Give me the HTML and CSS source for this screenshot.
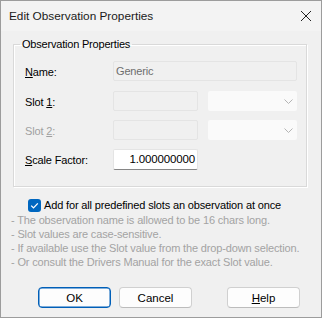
FILE: index.html
```html
<!DOCTYPE html>
<html lang="en">

<head>
    <meta charset="UTF-8">
    <title>Edit Observation Properties</title>
    <link rel="stylesheet" href="styles.css">
</head>

<body>
    <div class="window">
        <div class="titlebar">
            <span class="title">Edit Observation Properties</span>
            <svg class="close" width="12" height="12" viewBox="0 0 12 12">
                <path d="M1 1 L11 11 M11 1 L1 11" stroke="#222" stroke-width="1" fill="none" />
            </svg>
        </div>

        <div class="client">
            <fieldset class="group">
                <legend>Observation Properties</legend>
                <div class="fields">
                    <div class="row first">
                        <label><u>N</u>ame:</label>
                        <div class="field disabled name">Generic</div>
                    </div>

                    <div class="row">
                        <label>Slot <u>1</u>:</label>
                        <div class="field disabled"></div>
                        <div class="combo">
                            <svg width="9" height="5" viewBox="0 0 9 5"><path d="M0.5 0.5 L4.5 4.5 L8.5 0.5" stroke="#b4b4b4" fill="none" /></svg>
                        </div>
                    </div>

                    <div class="row">
                        <label class="off">Slot <u>2</u>:</label>
                        <div class="field disabled"></div>
                        <div class="combo">
                            <svg width="9" height="5" viewBox="0 0 9 5"><path d="M0.5 0.5 L4.5 4.5 L8.5 0.5" stroke="#b4b4b4" fill="none" /></svg>
                        </div>
                    </div>

                    <div class="row tall">
                        <label><u>S</u>cale Factor:</label>
                        <div class="field scale">1.000000000</div>
                    </div>
                </div>
            </fieldset>

            <label class="check">
                <span class="box">
                    <svg width="13" height="13" viewBox="0 0 13 13">
                        <rect x="0" y="0" width="13" height="13" rx="3" fill="#0067c0" />
                        <path d="M3.2 6.6 L5.5 8.9 L9.8 4.4" stroke="#fff" stroke-width="1.3" fill="none" />
                    </svg>
                </span>
                Add for all predefined slots an observation at once
            </label>

            <div class="notes">
                <div>- The observation name is allowed to be 16 chars long.</div>
                <div>- Slot values are case-sensitive.</div>
                <div>- If available use the Slot value from the drop-down selection.</div>
                <div>- Or consult the Drivers Manual for the exact Slot value.</div>
            </div>

            <div class="buttons">
                <button class="default">OK</button>
                <button>Cancel</button>
                <button class="help"><u>H</u>elp</button>
            </div>
        </div>
    </div>
</body>

</html>
```

FILE: styles.css
```css
html {
    background-color: #f0f0f0;
}

body {
    margin: 0;
    font-family: "Liberation Sans", Arial, sans-serif;
    font-size: 11px;
    letter-spacing: -0.15px;
    color: #000;
}

.window {
    width: 322px;
    height: 318px;
    box-sizing: border-box;
    border: 1px solid #9c9c9c;
    background-color: #f0f0f0;
}

.titlebar {
    height: 30px;
    display: flex;
    align-items: center;
    justify-content: space-between;
    padding: 0 9px 0 8px;
    background-color: #f3f3f3;
}

.title {
    font-size: 11.8px;
    letter-spacing: 0;
    color: #1a1a1a;
    padding-bottom: 1px;
}

.close {
    margin-bottom: 1px;
}

.client {
    padding: 0 0 0 12px;
}

.group {
    width: 294px;
    min-width: 0;
    box-sizing: border-box;
    margin: 7px 0 0 0;
    padding: 0;
    border: 1px solid #d9d9d9;
    box-shadow: inset 1px 1px 0 #fff, 1px 1px 0 #fff;
}

.group legend {
    margin-left: 6px;
    padding: 0 2px;
    line-height: 13px;
    letter-spacing: -0.2px;
}

.fields {
    display: flex;
    flex-direction: column;
    gap: 9px;
    padding: 10px 0 16px 11px;
}

.row {
    display: flex;
    align-items: center;
    height: 20px;
}

.row.first,
.row.tall {
    height: 21px;
}

.row label {
    width: 88px;
    flex: none;
    padding-top: 1px;
}

.row label.off {
    color: #a0a0a0;
}

.field {
    width: 85px;
    height: 20px;
    flex: none;
    box-sizing: border-box;
    border: 1px solid #e4e4e4;
    border-radius: 2px;
    line-height: 18px;
    padding: 0 2px;
}

.field.disabled {
    background-color: #f0f0f0;
    color: #6d6d6d;
}

.field.name {
    width: 184px;
    align-self: flex-start;
}

.field.scale {
    height: 21px;
    background-color: #fff;
    border-bottom-color: #868686;
    text-align: right;
    line-height: 19px;
    font-size: 11.5px;
}

.combo {
    width: 89px;
    height: 20px;
    flex: none;
    margin-left: 10px;
    background-color: #fafafa;
    border-radius: 2px;
    display: flex;
    align-items: center;
    justify-content: flex-end;
    padding-right: 4px;
    box-sizing: border-box;
}

.check {
    display: flex;
    align-items: center;
    gap: 3px;
    height: 14px;
    margin: 11px 0 0 15px;
}

.box {
    display: flex;
}

.notes {
    margin: 1px 0 0 -2px;
    color: #a3a3a3;
}

.notes div {
    line-height: 14px;
}

.buttons {
    display: flex;
    gap: 8px;
    margin: 18px 0 0 25px;
}

button {
    width: 73px;
    height: 21px;
    box-sizing: border-box;
    padding: 0;
    background-color: #fdfdfd;
    border: 1px solid #d0d0d0;
    border-bottom-color: #bcbcbc;
    border-radius: 4px;
    font-family: "Liberation Sans", Arial, sans-serif;
    font-size: 11.5px;
    color: #000;
}

button.default {
    border: 1px solid #005fb8;
    box-shadow: inset 0 0 0 0.5px #005fb8;
}

button.help {
    margin-left: 27px;
}
```
